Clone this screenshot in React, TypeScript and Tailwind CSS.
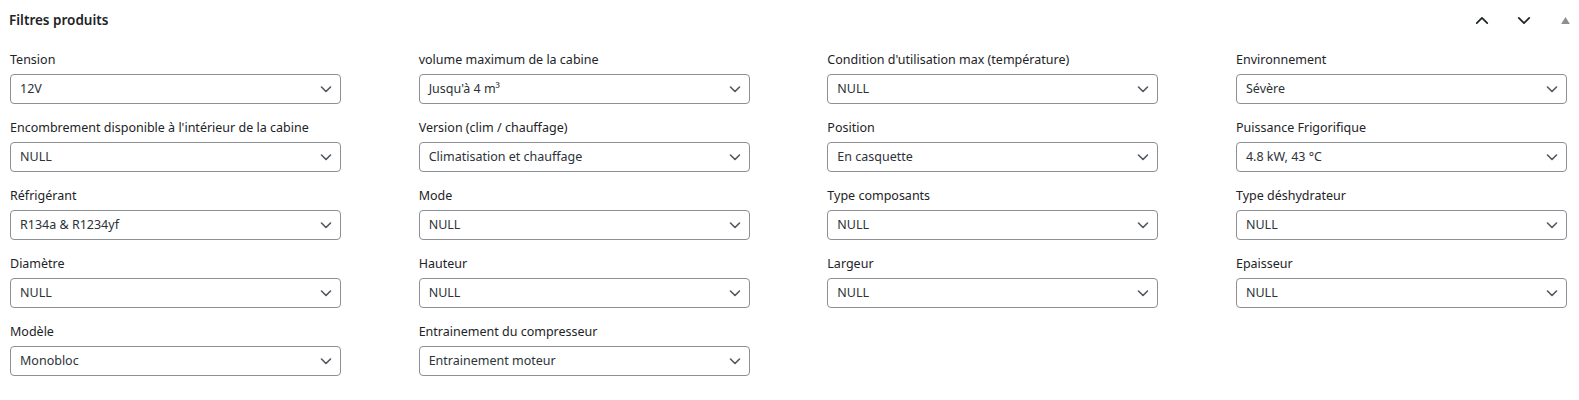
import React from "react";

type Field = { label: string; value: string };

const fields: Field[] = [
  { label: "Tension", value: "12V" },
  { label: "volume maximum de la cabine", value: "Jusqu'à 4 m³" },
  { label: "Condition d'utilisation max (température)", value: "NULL" },
  { label: "Environnement", value: "Sévère" },
  { label: "Encombrement disponible à l'intérieur de la cabine", value: "NULL" },
  { label: "Version (clim / chauffage)", value: "Climatisation et chauffage" },
  { label: "Position", value: "En casquette" },
  { label: "Puissance Frigorifique", value: "4.8 kW, 43 °C" },
  { label: "Réfrigérant", value: "R134a & R1234yf" },
  { label: "Mode", value: "NULL" },
  { label: "Type composants", value: "NULL" },
  { label: "Type déshydrateur", value: "NULL" },
  { label: "Diamètre", value: "NULL" },
  { label: "Hauteur", value: "NULL" },
  { label: "Largeur", value: "NULL" },
  { label: "Epaisseur", value: "NULL" },
  { label: "Modèle", value: "Monobloc" },
  { label: "Entrainement du compresseur", value: "Entrainement moteur" },
];

function Chevron({ up = false, className = "" }: { up?: boolean; className?: string }) {
  return (
    <svg viewBox="0 0 16 10" className={className} fill="none" stroke="currentColor" strokeWidth={2} strokeLinecap="round" strokeLinejoin="round">
      {up ? <path d="M2 8 L8 2 L14 8" /> : <path d="M2 2 L8 8 L14 2" />}
    </svg>
  );
}

function SelectBox({ label, value }: Field) {
  return (
    <div className="flex flex-col">
      <label className="text-[12.5px] leading-[18px] text-[#1d2327] whitespace-nowrap">{label}</label>
      <div className="mt-[5px] flex h-[30px] w-[331px] items-center justify-between rounded-[4px] border border-[#8c8f94] bg-white pl-[9px] pr-[8px]">
        <span className="text-[12.5px] text-[#2c3338] whitespace-nowrap">{value}</span>
        <svg viewBox="0 0 12 7" className="h-[7px] w-[12px] text-[#50575e]" fill="none" stroke="currentColor" strokeWidth={1.6} strokeLinecap="round" strokeLinejoin="round">
          <path d="M1.5 1 L6 5.5 L10.5 1" />
        </svg>
      </div>
    </div>
  );
}

export default function App() {
  return (
    <div className="w-[1579px] h-[400px] bg-white" style={{ fontFamily: '"Noto Sans", "Liberation Sans", sans-serif' }}>
      <div className="flex h-[40px] items-center justify-between pl-[9px] pr-[9px]">
        <h2 className="text-[13.5px] font-semibold text-[#1d2327]">Filtres produits</h2>
        <div className="flex items-center text-[#1d2327]">
          <Chevron up className="h-[9px] w-[14px]" />
          <Chevron className="ml-[28px] h-[9px] w-[14px]" />
          <svg viewBox="0 0 10 8" className="ml-[30px] h-[7px] w-[9px] text-[#8c8f94]" fill="currentColor">
            <path d="M5 0 L10 8 L0 8 Z" />
          </svg>
        </div>
      </div>
      <div className="grid grid-cols-[repeat(4,331px)] justify-between gap-y-[15px] pl-[10px] pr-[12px] pt-[11px]">
        {fields.map((f) => (
          <SelectBox key={f.label} {...f} />
        ))}
      </div>
    </div>
  );
}
